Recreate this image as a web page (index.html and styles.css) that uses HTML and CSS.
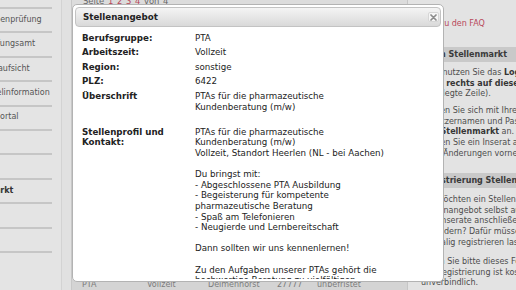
FILE: index.html
```html
<!DOCTYPE html>
<html lang="de">
<head>
<meta charset="utf-8">
<title>Stellenangebot</title>
<link rel="stylesheet" href="styles.css">
</head>
<body>
<div class="page">
  <nav class="sidebar">
    <ul class="nav-list">
      <li class="nav-item">Weiterbildung</li>
      <li class="nav-item">Fachsprachenprüfung</li>
      <li class="nav-item">Landesprüfungsamt</li>
      <li class="nav-item">Apothekenaufsicht</li>
      <li class="nav-item">Arzneimittelinformation</li>
      <li class="nav-item">Mitgliederportal</li>
      <li class="nav-item">Notdienst</li>
      <li class="nav-item">Termine</li>
      <li class="nav-item nav-item-active">Stellenmarkt</li>
      <li class="nav-item">Kontakt</li>
      <li class="nav-item">Links</li>
    </ul>
  </nav>
  <main class="main">
    <div class="gutter"></div>
    <div class="content">
      <div class="pager">Seite <span class="pager-link">1</span> <span class="pager-link">2</span> <span class="pager-link">3</span> <span class="pager-link">4</span> von 4</div>
      <div class="listing-row">
        <span>PTA</span>
        <span>Vollzeit</span>
        <span>Delmenhorst</span>
        <span>27777</span>
        <span>unbefristet</span>
      </div>
    </div>
  </main>
  <aside class="aside">
    <div class="faq-link">Link zu den FAQ</div>
    <div class="aside-bar bar-first">Login Stellenmarkt</div>
    <p class="aside-text text-first">Bitte nutzen Sie das <b>Login</b><br><b>oben rechts auf dieser Seite</b> (gelb<br>unterlegte Zeile).</p>
    <p class="aside-text text-next">Melden Sie sich mit Ihrem<br>Benutzernamen und Passwort<br>zum <b>Stellenmarkt</b> an. Dort<br>können Sie ein Inserat aufgeben oder<br>auch Änderungen vornehmen.</p>
    <div class="aside-bar bar-second">Registrierung Stellenanbieter</div>
    <p class="aside-text text-after-bar">Sie möchten ein Stellengesuch oder<br>Stellenangebot selbst aufgeben und<br>Ihre Inserate anschließend selbst<br>verändern? Dafür müssen Sie sich<br>einmalig registrieren lassen.</p>
    <p class="aside-text text-last">Füllen Sie bitte dieses Formular aus.<br>Die Registrierung ist kostenlos und<br>unverbindlich.</p>
  </aside>
</div>

<div class="modal">
  <div class="modal-header">
    <span class="modal-title">Stellenangebot</span>
    <span class="modal-close"><svg width="7" height="7" viewBox="0 0 7 7"><path d="M1 1L6 6M6 1L1 6" stroke="#8c8c8c" stroke-width="1.7" stroke-linecap="round"/></svg></span>
  </div>
  <div class="modal-body">
    <dl class="details">
      <dt>Berufsgruppe:</dt><dd>PTA</dd>
      <dt>Arbeitszeit:</dt><dd>Vollzeit</dd>
      <dt>Region:</dt><dd>sonstige</dd>
      <dt>PLZ:</dt><dd>6422</dd>
      <dt class="spaced">Überschrift</dt><dd class="spaced">PTAs für die pharmazeutische<br>Kundenberatung (m/w)</dd>
      <dt>Stellenprofil und Kontakt:</dt>
      <dd>PTAs für die pharmazeutische<br>Kundenberatung (m/w)<br>Vollzeit, Standort Heerlen (NL - bei Aachen)<br><br>Du bringst mit:<br>- Abgeschlossene PTA Ausbildung<br>- Begeisterung für kompetente<br>pharmazeutische Beratung<br>- Spaß am Telefonieren<br>- Neugierde und Lernbereitschaft<br><br>Dann sollten wir uns kennenlernen!<br><br>Zu den Aufgaben unserer PTAs gehört die<br>hochwertige Beratung zu vielfältigen<br>pharmazeutischen Fragestellungen am Telefon.</dd>
    </dl>
  </div>
</div>
</body>
</html>
```

FILE: styles.css
```css
* {
  box-sizing: border-box;
}

html,
body {
  margin: 0;
  padding: 0;
}

body {
  position: relative;
  width: 516px;
  height: 290px;
  overflow: hidden;
  font-family: "DejaVu Sans", Verdana, sans-serif;
  font-size: 8.7px;
  line-height: 10.6px;
  color: #333;
  background: #dedede;
}

.page {
  display: flex;
  height: 290px;
  margin-left: -60px;
}

/* Sidebar */
.sidebar {
  flex: none;
  width: 122px;
  padding-left: 9px;
  background: #e4e4e4;
  border-right: 1px solid #d3d3d3;
  font-size: 8px;
}

.nav-list {
  list-style: none;
  margin: -15.4px 9px 0 -9px;
  padding: 0;
}

.nav-item {
  display: flex;
  align-items: center;
  height: 24.4px;
  padding-left: 15px;
  border-bottom: 2px solid #c6c6c6;
  color: #555;
  white-space: nowrap;
}

.nav-item-active {
  font-weight: bold;
  color: #333;
}

/* Main column */
.main {
  flex: none;
  display: flex;
  width: 345px;
}

.gutter {
  flex: none;
  width: 10px;
  background: #e1e1e1;
  border-right: 1px solid #c8c8c8;
}

.content {
  flex: 1;
  display: flex;
  flex-direction: column;
  background: #dcdcdc;
  font-size: 8px;
}

.pager {
  margin-top: -4px;
  padding-left: 11px;
  font-size: 8.4px;
  word-spacing: 1px;
  color: #666;
  white-space: nowrap;
}

.pager-link {
  color: #b8485a;
}

.listing-row {
  margin-top: auto;
  display: grid;
  grid-template-columns: 65px 61px 69px 40px 1fr;
  height: 10px;
  padding-left: 10px;
  line-height: 9px;
  background: #d4d4d4;
  color: #7c7c7c;
  white-space: nowrap;
}

/* Right column */
.aside {
  flex: none;
  display: flex;
  flex-direction: column;
  width: 240px;
  padding: 18.7px 0 0 13px;
  background: #e3e3e3;
  border-left: 1px solid #c6c6c6;
  font-size: 8px;
  line-height: 10.8px;
  color: #4d4d4d;
  white-space: nowrap;
}

.faq-link {
  color: #b8485a;
}

.aside-bar {
  height: 15px;
  margin-left: -13px;
  padding-left: 13px;
  line-height: 15px;
  font-weight: bold;
  color: #3a3a3a;
  background: #c9c9c9;
}

.bar-first {
  margin-top: 17.7px;
}

.bar-second {
  margin-top: 13.4px;
}

.aside-text {
  margin: 0;
}

.aside-text b {
  color: #363636;
}

.text-first {
  margin-top: 5.6px;
}

.text-next {
  margin-top: 5.6px;
}

.text-after-bar {
  margin-top: 6.6px;
}

.text-last {
  margin-top: 8px;
}

/* Modal dialog (overlay) */
.modal {
  position: absolute;
  left: 72px;
  top: 4px;
  width: 372px;
  height: 278px;
  display: flex;
  flex-direction: column;
  padding: 2px;
  background: #fff;
  border: 1px solid #b3b3b3;
  border-radius: 5px;
}

.modal-header {
  flex: none;
  display: flex;
  align-items: center;
  justify-content: space-between;
  height: 20px;
  padding: 0 1px 0 7px;
  border: 1px solid #c3c3c3;
  border-radius: 4px;
  background: linear-gradient(#f4f4f4, #d9d9d9);
}

.modal-title {
  font-weight: bold;
  color: #222;
}

.modal-close {
  display: flex;
  align-items: center;
  justify-content: center;
  width: 11px;
  height: 10px;
  background: #f6f6f6;
  border: 1px solid #d6d6d6;
  border-radius: 2px;
}

.modal-body {
  flex: 1;
  overflow: hidden;
  padding: 3.7px 6px 0 7px;
}

.details {
  display: grid;
  grid-template-columns: 113px 1fr;
  margin: 0;
  color: #222;
}

.details dt {
  padding: 2px 8px 2px 0;
  font-weight: bold;
}

.details dd {
  margin: 0;
  padding: 2px 0;
  white-space: nowrap;
}

.details .spaced {
  padding-bottom: 12.6px;
}
```
